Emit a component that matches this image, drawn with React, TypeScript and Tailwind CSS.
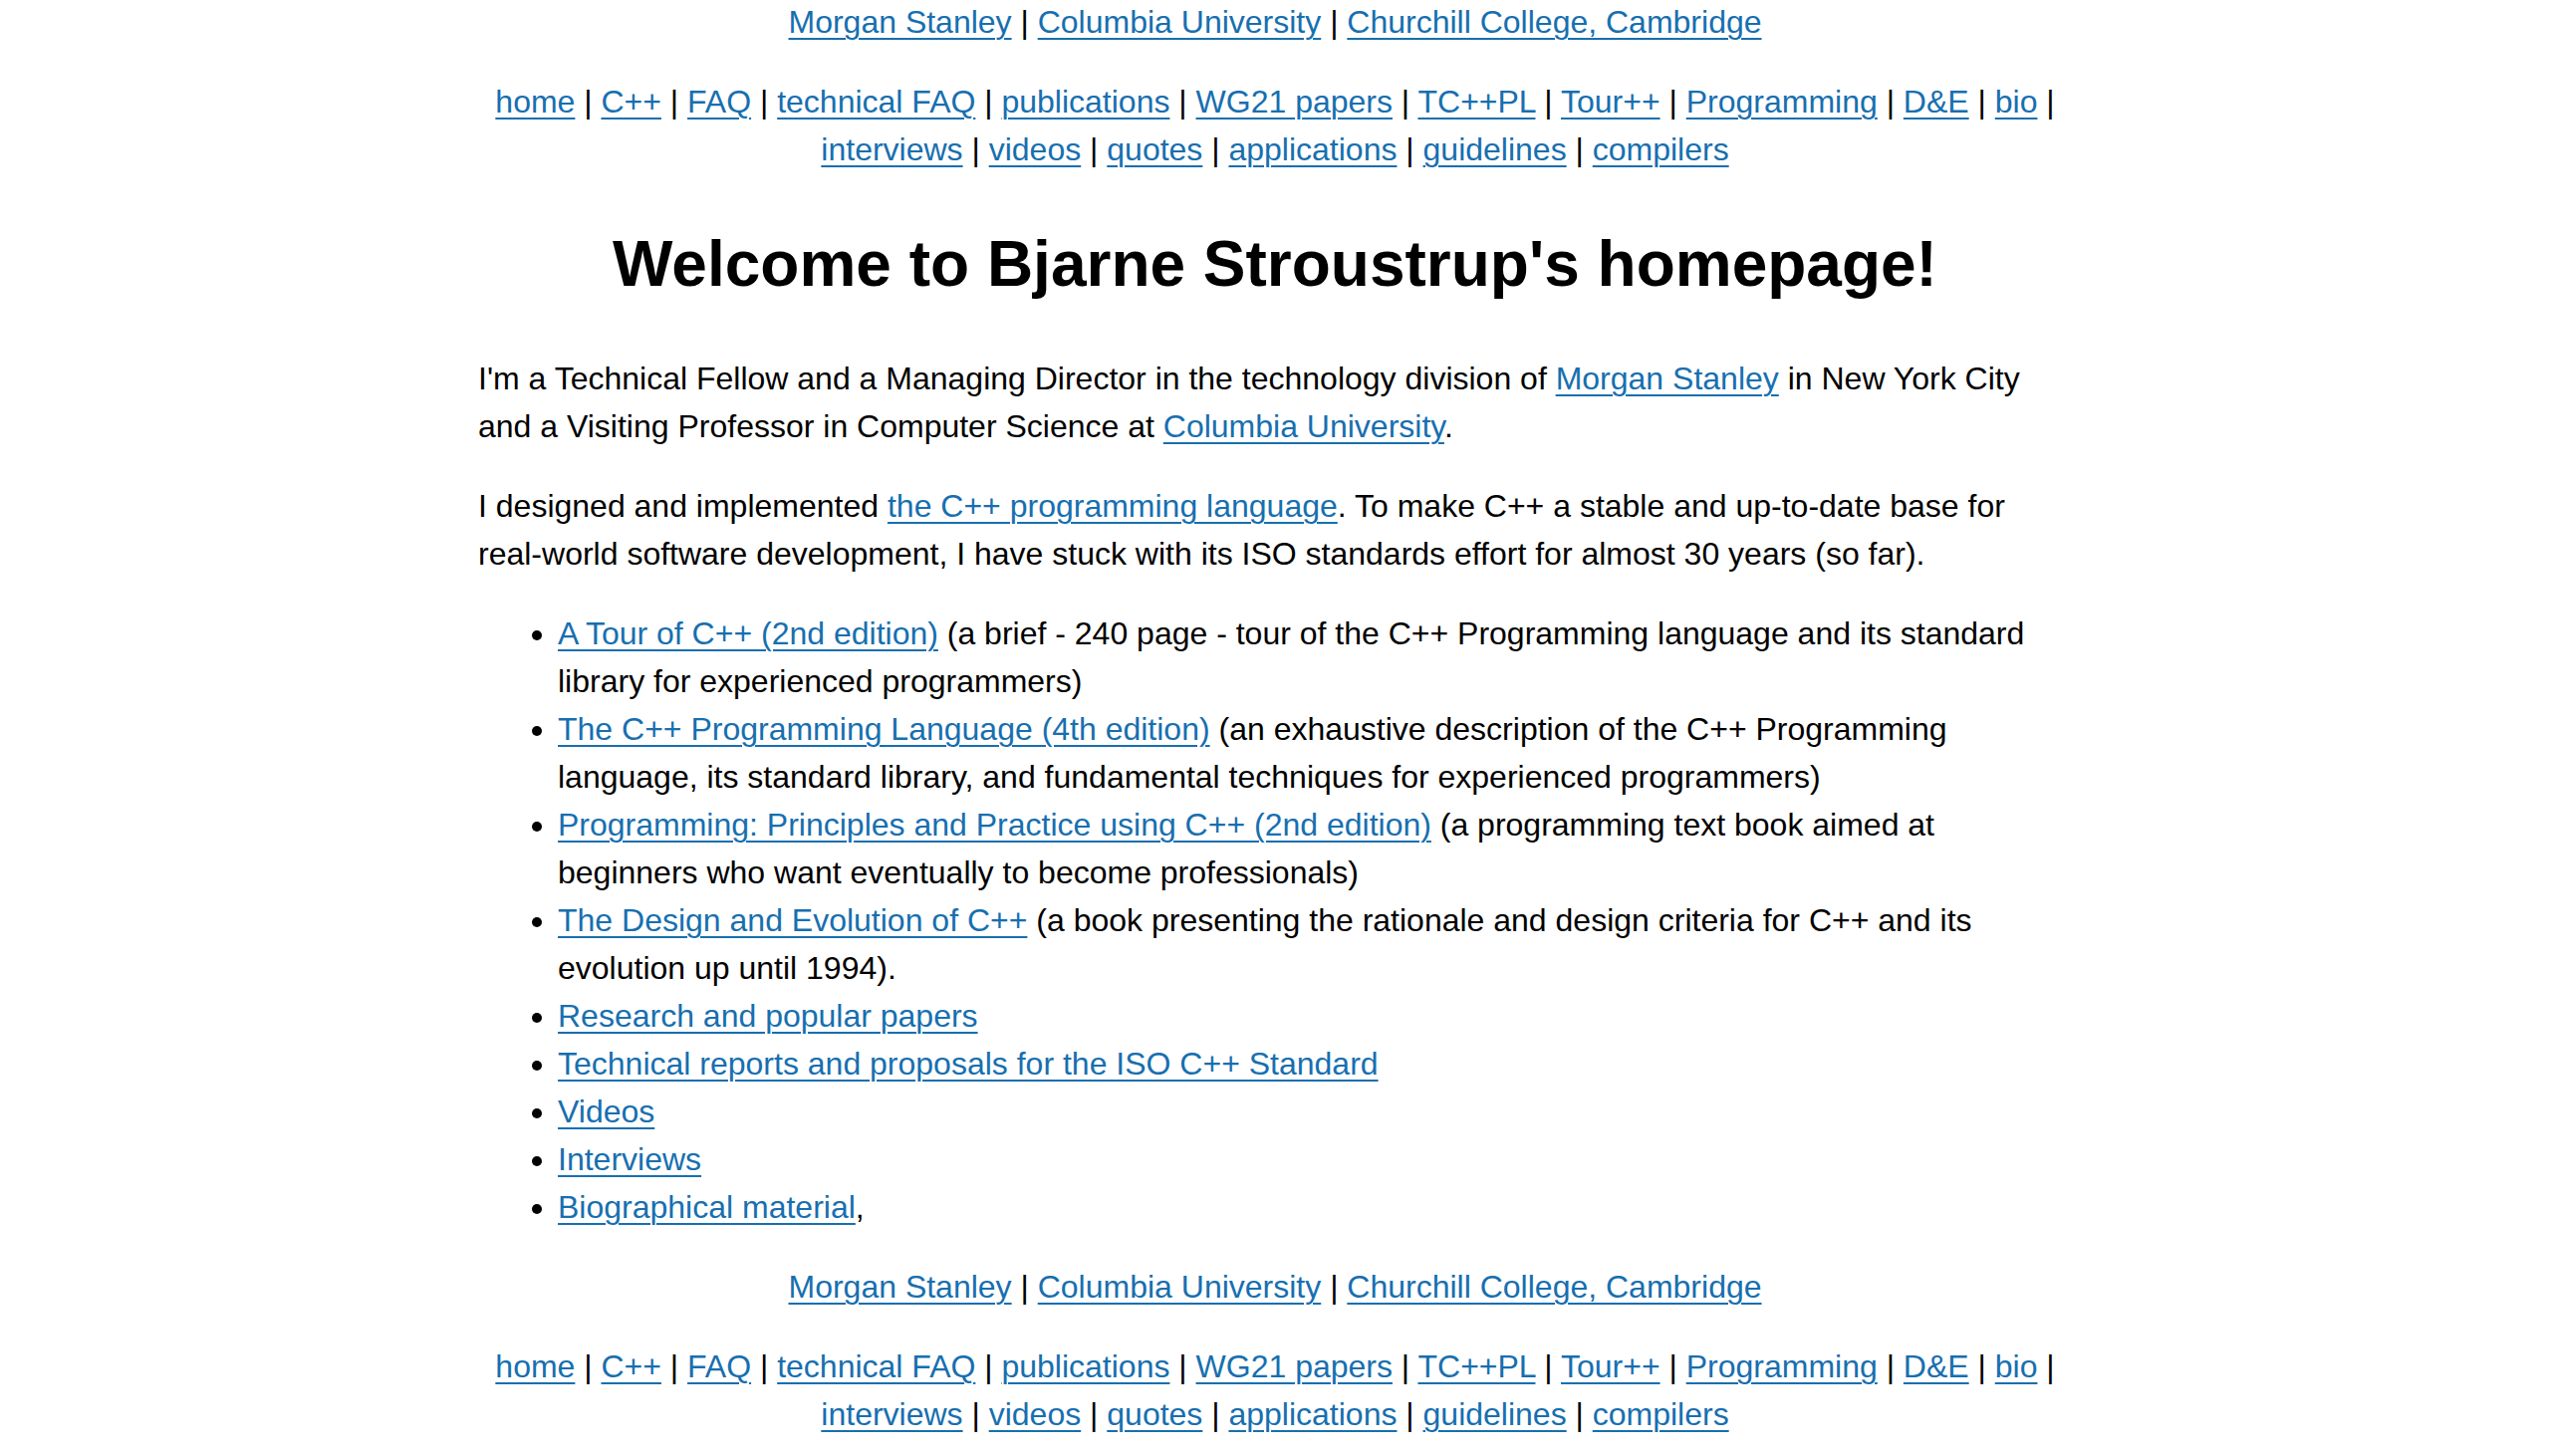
import React from "react";

const affiliations = ["Morgan Stanley", "Columbia University", "Churchill College, Cambridge"];
const navLinks = [
  "home", "C++", "FAQ", "technical FAQ", "publications", "WG21 papers", "TC++PL", "Tour++",
  "Programming", "D&E", "bio", "interviews", "videos", "quotes", "applications", "guidelines", "compilers",
];

function A({ children }: { children: React.ReactNode }) {
  return (
    <a href="#" className="text-[#176fb0] underline decoration-[2px] underline-offset-[5px]">
      {children}
    </a>
  );
}

function Bars({ items }: { items: string[] }) {
  return (
    <>
      {items.map((item, i) => (
        <React.Fragment key={item}>
          {i > 0 && " | "}
          <A>{item}</A>
        </React.Fragment>
      ))}
    </>
  );
}

function Header() {
  return (
    <>
      <p className="mt-0 mb-8 text-center">
        <Bars items={affiliations} />
      </p>
      <p className="my-8 text-center">
        <Bars items={navLinks} />
      </p>
    </>
  );
}

const books = [
  ["A Tour of C++ (2nd edition)", " (a brief - 240 page - tour of the C++ Programming language and its standard library for experienced programmers)"],
  ["The C++ Programming Language (4th edition)", " (an exhaustive description of the C++ Programming language, its standard library, and fundamental techniques for experienced programmers)"],
  ["Programming: Principles and Practice using C++ (2nd edition)", " (a programming text book aimed at beginners who want eventually to become professionals)"],
  ["The Design and Evolution of C++", " (a book presenting the rationale and design criteria for C++ and its evolution up until 1994)."],
  ["Research and popular papers", ""],
  ["Technical reports and proposals for the ISO C++ Standard", ""],
  ["Videos", ""],
  ["Interviews", ""],
  ["Biographical material", ","],
];

export default function App() {
  return (
    <div className="min-h-screen overflow-hidden bg-white font-['Liberation_Sans',Arial,sans-serif] text-[32px] leading-[48px] text-black">
      <div className="mx-auto -mt-[2px] w-[1600px]">
        <Header />

        <h1 className="my-[43px] text-center text-[64px] font-bold leading-[96px]">
          Welcome to Bjarne Stroustrup's homepage!
        </h1>

        <p className="my-8">
          I'm a Technical Fellow and a Managing Director in the technology division of <A>Morgan Stanley</A> in New York City
          and a Visiting Professor in Computer Science at <A>Columbia University</A>.
        </p>

        <p className="my-8">
          I designed and implemented <A>the C++ programming language</A>. To make C++ a stable and up-to-date base for
          real-world software development, I have stuck with its ISO standards effort for almost 30 years (so far).
        </p>

        <ul className="my-8 list-disc pl-[80px]">
          {books.map(([link, rest]) => (
            <li key={link}>
              <A>{link}</A>
              {rest}
            </li>
          ))}
        </ul>

        <Header />
      </div>
    </div>
  );
}
